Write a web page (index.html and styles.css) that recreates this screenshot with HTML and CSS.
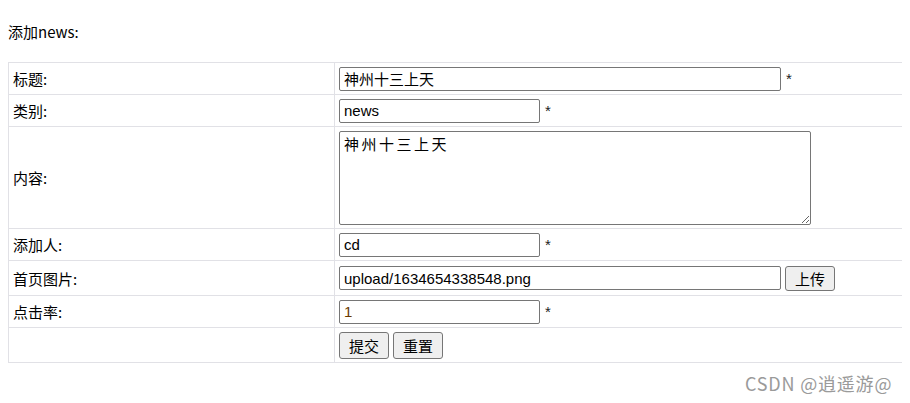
FILE: index.html
```html
<!DOCTYPE html>
<html>
<head>
<meta charset="utf-8">
<link rel="stylesheet" href="styles.css">
</head>
<body>
<div class="title">添加news:</div>
<table class="form">
  <tr class="r-std">
    <td class="lbl">标题:</td>
    <td class="val"><input class="inp wide" type="text" value="神州十三上天"><span class="req">*</span></td>
  </tr>
  <tr class="r-std">
    <td class="lbl">类别:</td>
    <td class="val"><input class="inp narrow" type="text" value="news"><span class="req">*</span></td>
  </tr>
  <tr class="r-area">
    <td class="lbl">内容:</td>
    <td class="val"><textarea class="area">神州十三上天</textarea></td>
  </tr>
  <tr class="r-std">
    <td class="lbl">添加人:</td>
    <td class="val"><input class="inp narrow" type="text" value="cd"><span class="req">*</span></td>
  </tr>
  <tr class="r-btn">
    <td class="lbl">首页图片:</td>
    <td class="val"><input class="inp wide" type="text" value="upload/1634654338548.png"><button class="btn gap">上传</button></td>
  </tr>
  <tr class="r-std">
    <td class="lbl">点击率:</td>
    <td class="val"><input class="inp narrow num" type="text" value="1"><span class="req">*</span></td>
  </tr>
  <tr class="r-btn">
    <td class="lbl"></td>
    <td class="val"><button class="btn tall">提交</button><button class="btn tall gap">重置</button></td>
  </tr>
</table>
<div class="mark">CSDN @逍遥游@</div>
</body>
</html>
```
FILE: styles.css
```css
html {
  overflow: hidden;
}
body {
  margin: 8px;
  font-family: "Noto Sans CJK SC", "Liberation Sans", sans-serif;
  font-size: 15px;
  color: #000;
  background: #fff;
}
.title {
  padding-top: 14px;
  height: 20px;
  line-height: 20px;
  margin-bottom: 20px;
  font-size: 15px;
}
.form {
  border-collapse: collapse;
  width: calc(100% + 8px);
}
.form td {
  border: 1px solid #e1e1e6;
  padding: 0 4px;
  vertical-align: middle;
}
.form td.val {
  border-right: 0;
}
.lbl {
  width: 317px;
  font-size: 15px;
}
.r-std td { height: 31px; }
.r-area td { height: 101px; }
.r-btn td { height: 34px; }
.val {
  white-space: nowrap;
  font-size: 15px;
}
.inp {
  box-sizing: border-box;
  height: 24px;
  border: 1px solid #767676;
  border-radius: 2px;
  padding: 1px 4px;
  font-family: "Liberation Sans", "Noto Sans CJK SC", sans-serif;
  font-size: 15px;
  color: #000;
  vertical-align: middle;
  margin: 0;
}
.inp.wide { width: 442px; }
.inp.narrow { width: 201px; }
.inp.num { color: #6b3a00; }
.req {
  margin-left: 5px;
  font-family: "Liberation Sans", sans-serif;
  font-size: 15px;
  color: #222;
  vertical-align: middle;
}
.area {
  box-sizing: border-box;
  display: block;
  width: 472px;
  height: 94px;
  border: 1px solid #767676;
  border-radius: 2px;
  padding: 2px 4px;
  font-family: "Noto Sans CJK SC", monospace;
  font-size: 15px;
  letter-spacing: 2.5px;
  line-height: 20px;
  margin: 0;
  resize: both;
}
.btn {
  box-sizing: border-box;
  height: 25px;
  width: 50px;
  padding: 0;
  margin: 0;
  border: 1px solid #767676;
  border-radius: 3px;
  background: #efefef;
  font-family: "Noto Sans CJK SC", sans-serif;
  font-size: 15px;
  color: #000;
  vertical-align: middle;
}
.btn.gap { margin-left: 4px; }
.btn.tall { height: 27px; }
.mark {
  position: absolute;
  left: 745px;
  top: 371px;
  font-family: "Noto Sans CJK SC", "Liberation Sans", sans-serif;
  font-size: 18px;
  line-height: 24px;
  color: #9a9a9a;
  letter-spacing: 0.8px;
}
```
